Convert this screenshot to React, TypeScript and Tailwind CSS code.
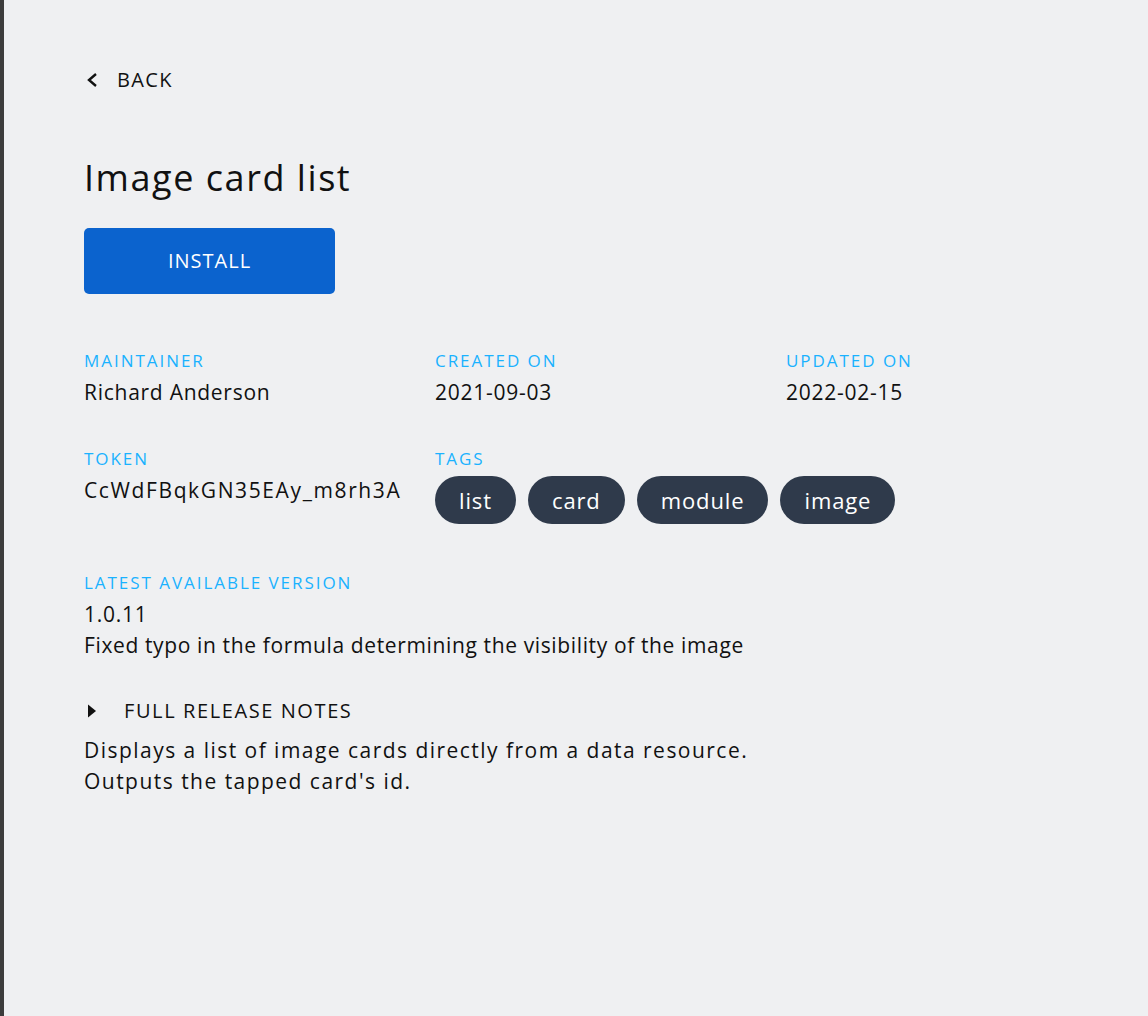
import React from 'react';

const Label: React.FC<{ children: React.ReactNode }> = ({ children }) => (
  <div className="text-[17px] leading-5 tracking-[0.115em] text-[#1ab2ff] uppercase">{children}</div>
);

const Value: React.FC<{ children: React.ReactNode; wide?: boolean }> = ({ children, wide }) => (
  <div className={`mt-[6px] text-[21px] leading-[30px] ${wide ? 'tracking-[0.077em]' : 'tracking-[0.035em]'}`}>
    {children}
  </div>
);

const tags = ['list', 'card', 'module', 'image'];

export default function App() {
  return (
    <div className="min-h-[1016px] bg-[#eff0f2] border-l-4 border-[#3c3c3c] text-[#111] font-['Open_Sans',sans-serif]">
      <div className="pl-[80px] pt-[68px]">
        {/* back link */}
        <button className="flex items-center gap-[19px] h-6 text-[20px] leading-6 tracking-[0.07em] text-[#111]">
          <svg width="14" height="16" viewBox="0 0 14 16">
            <path d="M12 2 L5 8 L12 14" stroke="#111" strokeWidth="2.4" fill="none" />
          </svg>
          BACK
        </button>

        <h1 className="mt-[64px] text-[36px] leading-[44px] tracking-[0.043em] text-[#111]">Image card list</h1>

        <button className="mt-[28px] w-[251px] h-[66px] rounded-[5px] bg-[#0b63ce] text-white text-[20px] tracking-[0.05em]">
          INSTALL
        </button>

        <div className="mt-[57px] grid grid-cols-[351px_351px_351px]">
          <div>
            <Label>Maintainer</Label>
            <Value>Richard Anderson</Value>
          </div>
          <div>
            <Label>Created on</Label>
            <Value>2021-09-03</Value>
          </div>
          <div>
            <Label>Updated on</Label>
            <Value>2022-02-15</Value>
          </div>
        </div>

        <div className="mt-[42px] grid grid-cols-[351px_702px]">
          <div>
            <Label>Token</Label>
            <Value wide>CcWdFBqkGN35EAy_m8rh3A</Value>
          </div>
          <div>
            <Label>Tags</Label>
            <div className="mt-[7px] flex gap-3">
              {tags.map((t) => (
                <span
                  key={t}
                  className="h-12 px-6 rounded-full bg-[#2f3a4b] text-white text-[22px] leading-[48px] tracking-[0.04em]"
                >
                  {t}
                </span>
              ))}
            </div>
          </div>
        </div>

        <div className="mt-[49px]">
          <Label>Latest available version</Label>
          <div className="mt-[6px] text-[21px] leading-[31px] tracking-[0.035em]">1.0.11</div>
          <div className="text-[21px] leading-[31px] tracking-[0.03em]">
            Fixed typo in the formula determining the visibility of the image
          </div>
        </div>

        <button className="mt-[38px] flex items-center h-6 text-[20px] leading-6 tracking-[0.08em] text-[#111]">
          <svg width="12" height="16" viewBox="0 0 12 16" className="ml-[3px] mr-[25px]">
            <path d="M1 1.5 L9 8 L1 14.5 Z" fill="#111" />
          </svg>
          FULL RELEASE NOTES
        </button>

        <div className="mt-3 text-[21px] leading-[31px] tracking-[0.07em]">
          <div>Displays a list of image cards directly from a data resource.</div>
          <div>Outputs the tapped card's id.</div>
        </div>
      </div>
    </div>
  );
}
